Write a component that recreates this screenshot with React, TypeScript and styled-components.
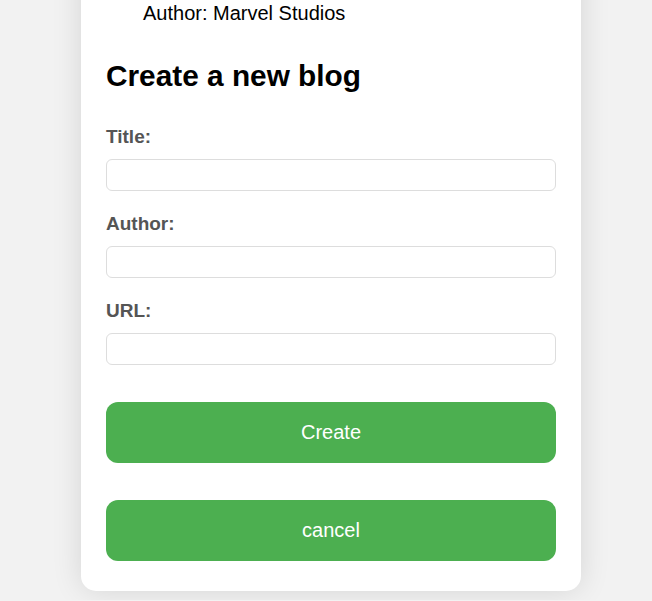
import React from "react";
import styled, { createGlobalStyle } from "styled-components";

const GlobalStyle = createGlobalStyle`
  html, body {
    margin: 0;
    padding: 0;
    background: #f2f2f2;
    font-family: "Liberation Sans", Arial, sans-serif;
  }
  * { box-sizing: border-box; }
`;

const Page = styled.div`
  display: flex;
  justify-content: center;
  padding: 0 0 9px 10px;
  overflow: hidden;
`;

const Card = styled.div`
  width: 500px;
  margin-top: -39px;
  padding: 41px 25px 30px;
  background: #ffffff;
  border-radius: 15px;
  box-shadow: 0 0 30px rgba(0, 0, 0, 0.12);
  display: flex;
  flex-direction: column;
`;

const DetailList = styled.ul`
  list-style: none;
  margin: 0;
  padding: 0 0 0 37px;
`;

const DetailItem = styled.li`
  font-size: 20px;
  line-height: 23px;
  color: #000;
`;

const Heading = styled.h2`
  margin: 34px 0 0;
  font-size: 29.8px;
  line-height: 33px;
  font-weight: 700;
  color: #000;
`;

const Form = styled.form`
  display: flex;
  flex-direction: column;
  margin-top: 34px;
`;

const Field = styled.div<{ $first?: boolean }>`
  display: flex;
  flex-direction: column;
  gap: 11px;
  margin-top: ${(p) => (p.$first ? "0" : "22px")};
`;

const Label = styled.label`
  font-size: 19px;
  line-height: 22px;
  font-weight: 700;
  color: #555555;
`;

const Input = styled.input`
  width: 100%;
  height: 32px;
  border: 1px solid #dddddd;
  border-radius: 6px;
  padding: 0 8px;
  font-size: 16px;
  font-family: inherit;
  background: #fff;
  outline: none;
`;

const Button = styled.button<{ $gap: number }>`
  margin-top: ${(p) => p.$gap}px;
  width: 100%;
  height: 61px;
  border: none;
  border-radius: 12px;
  background: #4caf50;
  color: #ffffff;
  font-family: inherit;
  font-size: 20px;
  cursor: pointer;
`;

export default function App() {
  return (
    <>
      <GlobalStyle />
      <Page>
        <Card>
          <DetailList>
            <DetailItem>Author: Marvel Studios</DetailItem>
          </DetailList>
          <Heading>Create a new blog</Heading>
          <Form onSubmit={(e) => e.preventDefault()}>
            <Field $first>
              <Label htmlFor="title">Title:</Label>
              <Input id="title" type="text" />
            </Field>
            <Field>
              <Label htmlFor="author">Author:</Label>
              <Input id="author" type="text" />
            </Field>
            <Field>
              <Label htmlFor="url">URL:</Label>
              <Input id="url" type="text" />
            </Field>
            <Button type="submit" $gap={37}>Create</Button>
            <Button type="button" $gap={37}>cancel</Button>
          </Form>
        </Card>
      </Page>
    </>
  );
}
